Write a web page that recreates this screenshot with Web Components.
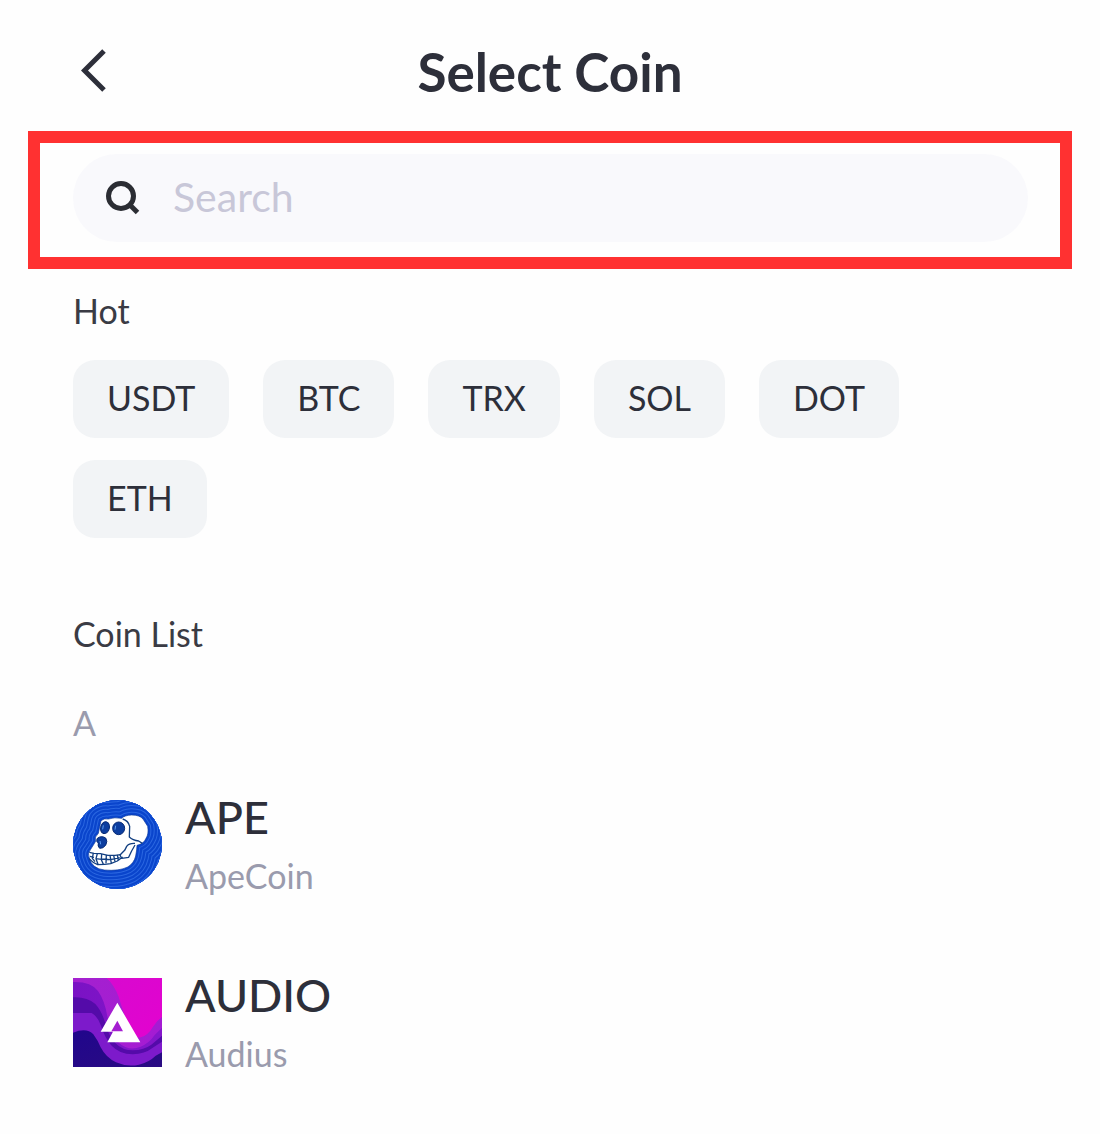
<!DOCTYPE html>
<html lang="en">
<head>
    <meta charset="UTF-8">
    <meta name="viewport" content="width=device-width, initial-scale=1.0">
    <title>Select Coin</title>
    <style>
        body {
            margin: 0;
            background: #fefefe;
            color: #2d2f3a;
            font-family: Lato, "Liberation Sans", sans-serif;
        }
    </style>
</head>
<body>

    <coin-page>
        <page-header slot="header">Select Coin</page-header>
        <search-box slot="search" placeholder="Search"></search-box>

        <coin-section>
            <span slot="title">Hot</span>
            <chip-list>
                <coin-chip>USDT</coin-chip>
                <coin-chip>BTC</coin-chip>
                <coin-chip>TRX</coin-chip>
                <coin-chip>SOL</coin-chip>
                <coin-chip>DOT</coin-chip>
                <coin-chip>ETH</coin-chip>
            </chip-list>
        </coin-section>

        <coin-section>
            <span slot="title">Coin List</span>
            <coin-group letter="A">
                <coin-row symbol="APE" name="ApeCoin"><ape-logo></ape-logo></coin-row>
                <coin-row symbol="AUDIO" name="Audius"><audius-logo></audius-logo></coin-row>
            </coin-group>
        </coin-section>
    </coin-page>

</body>

<script>

    // common base: every element only has to return its own markup
    class BaseElement extends HTMLElement {
        constructor() {
            super();
            this.attachShadow({mode: 'open'});
        }

        connectedCallback() {
            const template = document.createElement('template');
            template.innerHTML = this.render();
            this.shadowRoot.replaceChildren(template.content.cloneNode(true));
        }
    }

    class CoinPage extends BaseElement {
        render() {
            return `
                <style>
                    :host { display: block; }
                    .search { padding: 0 28px; }
                    main {
                        display: flex;
                        flex-direction: column;
                        gap: 74px;
                        padding: 20px 72px 40px 73px;
                    }
                </style>
                <slot name="header"></slot>
                <div class="search"><slot name="search"></slot></div>
                <main><slot></slot></main>
            `;
        }
    }

    class PageHeader extends BaseElement {
        render() {
            return `
                <style>
                    :host { display: block; }
                    header {
                        display: grid;
                        grid-template-columns: 1fr auto 1fr;
                        align-items: center;
                        padding: 40px 73px 27px;
                    }
                    button {
                        display: flex;
                        justify-self: start;
                        padding: 0 8px;
                        border: 0;
                        background: none;
                        color: inherit;
                    }
                    h1 {
                        margin: 0;
                        font-size: 53px;
                        line-height: 64px;
                        font-weight: 700;
                    }
                </style>
                <header>
                    <button type="button" aria-label="Back">
                        <svg width="26" height="46" viewBox="0 0 26 46" fill="none" stroke="currentColor" stroke-width="5">
                            <path d="M23 2 L3.500 21.500 L23 41"/>
                        </svg>
                    </button>
                    <h1><slot></slot></h1>
                </header>
            `;
        }
    }

    class SearchBox extends BaseElement {
        render() {
            return `
                <style>
                    :host {
                        display: block;
                        padding: 11px 32px 15px 33px;
                        border: 12px solid #ff3131;
                    }
                    label {
                        display: flex;
                        align-items: center;
                        gap: 32px;
                        padding: 0 32px;
                        border-radius: 44px;
                        background: #f9f9fc;
                    }
                    svg { flex: none; }
                    input {
                        flex: 1;
                        min-width: 0;
                        height: 88px;
                        padding: 0 0 4px;
                        box-sizing: border-box;
                        border: 0;
                        outline: 0;
                        background: none;
                        color: inherit;
                        font: inherit;
                        font-size: 41px;
                    }
                    input::placeholder { color: #c8c7d8; opacity: 1; }
                </style>
                <label>
                    <svg width="36" height="36" viewBox="0 0 36 36" fill="none" stroke="#2b2d33" stroke-width="5">
                        <circle cx="16" cy="16" r="12.500"/>
                        <path d="M24.500 24.500 L32.500 32.500"/>
                    </svg>
                    <input type="text" aria-label="Search" placeholder="${this.getAttribute('placeholder')}">
                </label>
            `;
        }
    }

    class CoinSection extends BaseElement {
        render() {
            return `
                <style>
                    :host { display: block; }
                    h2 {
                        margin: 0 0 27px;
                        color: #3a3b44;
                        font-size: 34px;
                        line-height: 44px;
                        font-weight: 400;
                    }
                </style>
                <h2><slot name="title"></slot></h2>
                <slot></slot>
            `;
        }
    }

    class ChipList extends BaseElement {
        render() {
            return `
                <style>
                    :host {
                        display: flex;
                        flex-wrap: wrap;
                        gap: 22px 34px;
                    }
                </style>
                <slot></slot>
            `;
        }
    }

    class CoinChip extends BaseElement {
        render() {
            return `
                <style>
                    :host { display: block; }
                    button {
                        display: block;
                        padding: 16px 34px 18px;
                        border: 0;
                        border-radius: 22px;
                        background: #f2f4f6;
                        color: inherit;
                        font: inherit;
                        font-size: 34px;
                        line-height: 44px;
                    }
                </style>
                <button type="button"><slot></slot></button>
            `;
        }
    }

    class CoinGroup extends BaseElement {
        render() {
            return `
                <style>
                    :host { display: block; }
                    h3 {
                        margin: 45px 0 40px;
                        color: #9a9bad;
                        font-size: 34px;
                        line-height: 44px;
                        font-weight: 400;
                    }
                    .rows {
                        display: flex;
                        flex-direction: column;
                        gap: 60px;
                    }
                </style>
                <h3>${this.getAttribute('letter')}</h3>
                <div class="rows"><slot></slot></div>
            `;
        }
    }

    class CoinRow extends BaseElement {
        render() {
            return `
                <style>
                    :host {
                        display: flex;
                        align-items: center;
                        gap: 23px;
                    }
                    .symbol, .name { margin: 0; }
                    .symbol {
                        font-size: 45px;
                        line-height: 64px;
                        font-weight: 500;
                    }
                    .name {
                        color: #9a9bad;
                        font-size: 34px;
                        line-height: 54px;
                    }
                </style>
                <slot></slot>
                <div>
                    <p class="symbol">${this.getAttribute('symbol')}</p>
                    <p class="name">${this.getAttribute('name')}</p>
                </div>
            `;
        }
    }

    class ApeLogo extends BaseElement {
        render() {
            // rings around the skull: wide strokes first, narrower ones on top
            const widths = [240, 220, 200, 180, 160, 140, 120, 100, 80, 60, 40, 20];
            const rings = widths.map((w) => `
                <use href="#skull" stroke="#2a66e0" stroke-width="${w}"/>
                <use href="#skull" stroke="#0a45cc" stroke-width="${w - 6}"/>
            `).join('');

            return `
                <style>
                    :host { display: block; flex: none; }
                    svg { display: block; }
                </style>
                <svg width="89" height="89" viewBox="38 42 267 267" aria-hidden="true">
                    <defs>
                        <clipPath id="disc"><circle cx="171.500" cy="175.500" r="133"/></clipPath>
                        <path id="skull" stroke-linejoin="round" d="M122 104 Q132 96 144 99 Q163 93 184 97 Q192 88 214 87 Q238 87 248 99 L262 121 Q266 144 257 157 Q250 174 230 178 Q230 190 226 210 Q221 232 202 243 Q176 256 132 252 Q95 248 87 216 Q80 202 91 190 L106 166 Q101 153 114 142 Z"/>
                    </defs>
                    <g clip-path="url(#disc)">
                        <rect x="38" y="42" width="267" height="267" fill="#0a45cc"/>
                        <g fill="none">${rings}</g>
                        <use href="#skull" fill="#fff" stroke="#0a3a9c" stroke-width="2"/>
                        <g fill="#0d3e9f" stroke="#082b75" stroke-width="3">
                            <ellipse cx="134" cy="125" rx="13" ry="18" transform="rotate(15 134 125)"/>
                            <ellipse cx="175" cy="127" rx="18" ry="19"/>
                            <path d="M110 158 Q122 147 136 156 Q143 165 136 178 Q128 188 118 187 Q111 181 114 171 Q107 168 110 158Z"/>
                        </g>
                        <g fill="none" stroke="#5b9bf0" stroke-width="3">
                            <path d="M129 118 L127 130 M166 119 L164 131 M119 165 L121 175"/>
                        </g>
                        <g fill="none" stroke="#123f80" stroke-width="4" stroke-linejoin="round">
                            <path d="M187 99 Q204 104 208 121 L207 153 Q217 163 235 165 L246 172"/>
                            <path d="M224 172 Q206 171 199 181 L193 193 L179 207 L184 217 L205 214 Q213 195 224 177"/>
                            <path d="M87 199 L101 202 L120 203 L143 208 L164 208 L181 206"/>
                            <path d="M86 218 Q97 230 112 236 Q135 236 151 233 L171 225 L187 213"/>
                            <path d="M99 201 L96 217 L104 227 M89 211 L101 214 M111 203 L107 218 L113 235 M124 204 L123 221 L129 235 M106 218 L124 220 M138 207 L137 232 M149 208 L153 232 M160 208 L164 227 M171 207 L174 222 M124 219 L151 221 L178 215"/>
                        </g>
                    </g>
                </svg>
            `;
        }
    }

    class AudiusLogo extends BaseElement {
        render() {
            return `
                <style>
                    :host { display: block; flex: none; }
                    svg { display: block; }
                </style>
                <svg width="89" height="89" viewBox="38 38 267 267" aria-hidden="true">
                    <defs>
                        <linearGradient id="base" x1="0" y1="0" x2="1" y2="1">
                            <stop offset="0" stop-color="#d40ccf"/>
                            <stop offset="1" stop-color="#e600cf"/>
                        </linearGradient>
                        <linearGradient id="outer" x1="0" y1="0" x2="1" y2="0">
                            <stop offset="0" stop-color="#a421cf"/>
                            <stop offset="1" stop-color="#a51bd3"/>
                        </linearGradient>
                        <linearGradient id="middle" x1="0" y1="0" x2="1" y2="0">
                            <stop offset="0" stop-color="#7a12c4"/>
                            <stop offset="1" stop-color="#8517cb"/>
                        </linearGradient>
                        <linearGradient id="deep" x1="0" y1="0" x2="1" y2="1">
                            <stop offset="0" stop-color="#20068c"/>
                            <stop offset="1" stop-color="#2a0b82"/>
                        </linearGradient>
                    </defs>
                    <rect x="38" y="38" width="267" height="267" fill="url(#base)"/>
                    <path fill="url(#outer)" d="M38 38 H139 Q162 60 174 92 L196 160 Q214 222 241 216 Q263 210 278 184 Q289 166 305 155 V305 H38Z"/>
                    <path fill="url(#middle)" d="M38 50 Q92 48 113 77 Q133 105 141 153 Q151 208 176 233 Q205 259 241 244 Q267 233 283 209 L305 187 V305 H38Z"/>
                    <path fill="#540ba9" d="M38 96 Q80 94 105 116 Q124 137 134 171 Q143 209 164 232 Q186 255 218 255 Q251 254 273 238 Q292 222 305 211 V305 H38Z"/>
                    <path fill="#7d1acb" d="M38 143 H94 Q112 153 122 181 Q134 219 154 241 Q177 266 217 267 Q254 266 275 249 Q292 237 305 229 V305 H38Z"/>
                    <path fill="url(#deep)" d="M38 202 Q79 185 99 207 Q113 226 121 246 Q137 277 167 291 Q201 306 236 298 Q267 290 286 271 L305 261 V305 H38Z"/>
                    <path fill="#fff" fill-rule="evenodd" d="M171 112 L240 231 H141 L158 199 H121 Z M171 166 L153 198 H188 Z"/>
                </svg>
            `;
        }
    }

    customElements.define('coin-page', CoinPage)
    customElements.define('page-header', PageHeader)
    customElements.define('search-box', SearchBox)
    customElements.define('coin-section', CoinSection)
    customElements.define('chip-list', ChipList)
    customElements.define('coin-chip', CoinChip)
    customElements.define('coin-group', CoinGroup)
    customElements.define('coin-row', CoinRow)
    customElements.define('ape-logo', ApeLogo)
    customElements.define('audius-logo', AudiusLogo)

</script>

</html>
